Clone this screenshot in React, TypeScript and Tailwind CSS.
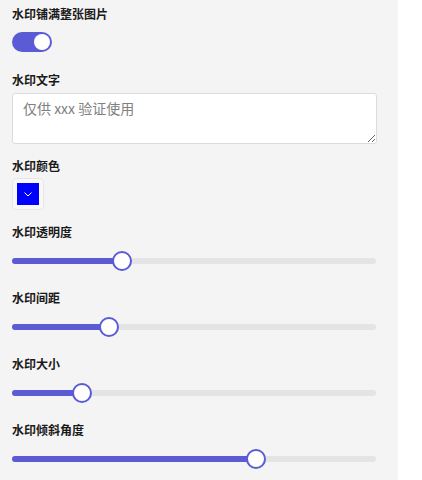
const labelClass = 'block text-[12px] leading-[16px] font-semibold text-[#1a1a1a]';

interface SliderProps {
    label: string;
    value: number;
}

function Slider({ label, value }: SliderProps) {
    return (
        <div className="mt-[14px]">
            <span className={labelClass}>{label}</span>
            <div className="relative mt-[11px] h-5 w-[364px]">
                <div className="absolute left-0 right-0 top-[7px] h-[6px] rounded-full bg-[#e4e4e7]" />
                <div
                    className="absolute left-0 top-[7px] h-[6px] rounded-full bg-[#5b5bd6]"
                    style={{ width: `${value}px` }}
                />
                <div
                    className="absolute top-0 h-5 w-5 rounded-full border-2 border-[#5b5bd6] bg-white"
                    style={{ left: `${value - 10}px` }}
                />
            </div>
            <div className="h-[5px]" />
        </div>
    );
}

function App() {
    const sliders = [
        { label: '水印透明度', value: 110 },
        { label: '水印间距', value: 97 },
        { label: '水印大小', value: 70 },
        { label: '水印倾斜角度', value: 244 },
    ];

    return (
        <div
            className="w-[398px] min-h-[480px] bg-[#f4f4f4] px-3 pt-[6px]"
            style={{ fontFamily: '"Noto Sans CJK SC", "Noto Sans", sans-serif' }}
        >
            <span className={labelClass}>水印铺满整张图片</span>
            <div className="mt-[10px] flex h-5 w-10 items-center justify-end rounded-full bg-[#5b5bd6] px-[2px]">
                <div className="h-4 w-4 rounded-full bg-white" />
            </div>

            <span className={`${labelClass} mt-[20px]`}>水印文字</span>
            <textarea
                className="mt-[5px] block h-[51px] w-[365px] rounded-[3px] border border-[#dcdcdc] bg-white px-[10px] py-[4px] text-[14px] leading-[20px] text-[#333] placeholder:text-[#808080] outline-none"
                placeholder="仅供 xxx 验证使用"
            />

            <span className={`${labelClass} mt-[14px]`}>水印颜色</span>
            <div className="mt-[4px] flex h-8 w-8 items-center justify-center rounded-[4px] border border-[#e6e6e6] bg-[#f8f8f8]">
                <div className="flex h-[22px] w-[22px] items-center justify-center bg-[#0000ff]">
                    <svg width="8" height="5" viewBox="0 0 8 5" fill="none">
                        <path d="M0.5 0.5 L4 4 L7.5 0.5" stroke="white" strokeWidth="1" />
                    </svg>
                </div>
            </div>

            {sliders.map((s) => (
                <Slider key={s.label} label={s.label} value={s.value} />
            ))}
        </div>
    );
}

export default App;
